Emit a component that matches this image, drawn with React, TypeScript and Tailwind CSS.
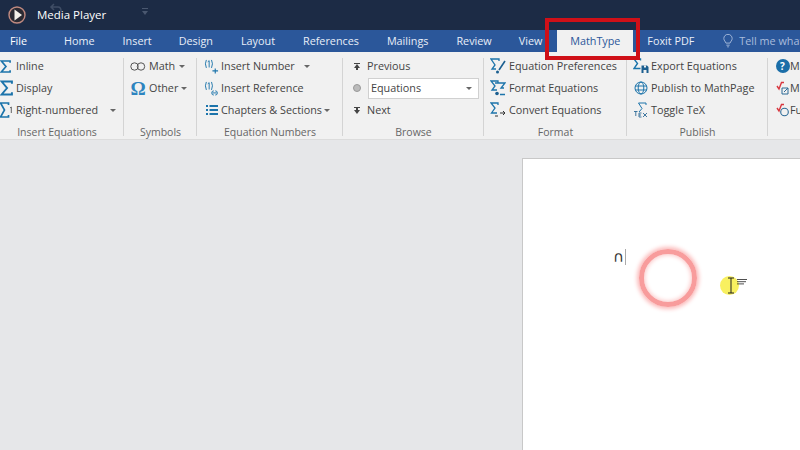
import type { ReactNode } from "react"

const font = { fontFamily: '"Open Sans", "Noto Sans", sans-serif' }
const teal = "#1c74ab"

const tabs = [
  ["Home", "ml-[37px]"],
  ["Insert", "ml-[28px]"],
  ["Design", "ml-[27px]"],
  ["Layout", "ml-[28px]"],
  ["References", "ml-[28px]"],
  ["Mailings", "ml-[28px]"],
  ["Review", "ml-[28px]"],
  ["View", "ml-[27px]"],
]

function Sigma({ className = "" }: { className?: string }) {
  return (
    <svg viewBox="0 0 12 14" className={className} fill="none" stroke={teal} strokeWidth="1.8">
      <path d="M11 3V1H1.500L6.500 7L1.500 13H11V11" />
    </svg>
  )
}

function Caret() {
  return <span className="inline-block w-0 h-0 border-x-[3px] border-x-transparent border-t-[3px] border-t-[#666]" />
}

function Row({ icon, label, caret, iconClass = "w-[16px]", className = "" }: { icon?: ReactNode; label: string; caret?: string; iconClass?: string; className?: string }) {
  return (
    <div className={`h-[22px] flex items-center whitespace-nowrap ${className}`}>
      <span className={`flex items-center justify-center flex-shrink-0 ${iconClass}`}>{icon}</span>
      <span>{label}</span>
      {caret && <span className={`flex ${caret}`}><Caret /></span>}
    </div>
  )
}

function Group({ title, width, children, last, titleClass = "" }: { title: string; width: string; children: ReactNode; last?: boolean; titleClass?: string }) {
  return (
    <div className={`relative h-full flex-shrink-0 flex flex-col ${width}`}>
      <div className="flex-1">{children}</div>
      <div className={`h-[16px] -mb-[1px] text-center text-[10.5px] leading-[16px] text-[#666] ${titleClass}`}>{title}</div>
      {!last && <div className="absolute right-0 top-[3px] bottom-[3px] w-px bg-[#d4d4d4]" />}
    </div>
  )
}

function Num({ children }: { children: ReactNode }) {
  return (
    <svg viewBox="0 0 16 16" className="w-[17px] h-[17px]" fill="none" stroke={teal}>
      <path d="M2.500 1Q0.500 5 2.500 9.500M8 1Q10 5 8 9.500M4 3L5.500 1.800V9" strokeWidth="1" />
      {children}
    </svg>
  )
}

export default function App() {
  return (
    <div className="w-[800px] h-[450px] relative overflow-hidden flex flex-col bg-[#e6e7e9] text-[10.8px] text-[#444]" style={font}>
      {/* title bar */}
      <div className="h-[30px] bg-[#1c2b45] flex items-center flex-shrink-0 text-white">
        <svg viewBox="0 0 18 18" className="w-[18px] h-[18px] ml-[8px] flex-shrink-0">
          <circle cx="9" cy="9" r="8" fill="#2a2a33" stroke="#c08a80" strokeWidth="1.4" />
          <path d="M6.500 3.500L14 9L6.500 14.500Z" fill="#f4f1ea" />
        </svg>
        <span className="ml-[11px] text-[11.5px] font-normal">Media Player</span>
        <svg viewBox="0 0 14 10" className="w-[14px] h-[10px] ml-[-57px] mb-[14px] opacity-30" fill="none" stroke="#8f9bb0" strokeWidth="1.5">
          <path d="M5 1L2 4L5 7M2 4H9Q12 4 12 8" />
        </svg>
        <svg viewBox="0 0 6 8" className="w-[6px] h-[8px] ml-[79px] mb-[6px] opacity-40" fill="#8f9bb0">
          <path d="M0 0H6V1H0ZM0 3H6L3 7Z" />
        </svg>
      </div>

      {/* tabs */}
      <div className="h-[22px] bg-[#2b579a] flex items-center flex-shrink-0 text-[#e8eef8] whitespace-nowrap">
        <span className="ml-[10px] text-white">File</span>
        {tabs.map(([name, margin]) => (
          <span key={name} className={margin}>{name}</span>
        ))}
        <div className="ml-[15px] w-[76px] h-full bg-[#f1f1f1] flex items-center justify-center text-[#2b579a] flex-shrink-0">MathType</div>
        <span className="ml-[14px]">Foxit PDF</span>
        <svg viewBox="0 0 12 16" className="w-[10px] h-[14px] ml-[29px] flex-shrink-0" fill="none" stroke="#a9bcdc" strokeWidth="1.1">
          <path d="M3.500 10.500C3 8.500 1 7.500 1 5A5 5 0 0 1 11 5C11 7.500 9 8.500 8.500 10.500ZM4 13H8M5 15H7" />
        </svg>
        <span className="ml-[6px] text-[#a9bcdc]">Tell me what</span>
      </div>

      {/* ribbon */}
      <div className="h-[88px] bg-[#f1f1f1] flex flex-shrink-0 pt-[3px] border-b border-[#dcdcdc]">
        <Group title="Insert Equations" width="w-[124px]" titleClass="pr-[10px]">
          <Row iconClass="w-[16px] !justify-start" icon={<Sigma className="w-[11px] h-[13px]" />} label="Inline" />
          <Row iconClass="w-[16px] !justify-start" icon={<Sigma className="w-[13px] h-[16px]" />} label="Display" />
          <Row
            iconClass="w-[16px] !justify-start"
            icon={
              <svg viewBox="0 0 13 16" className="w-[13px] h-[16px]" fill="none" stroke={teal} strokeWidth="1.7">
                <path d="M8.500 3V1H0.500L4.500 8L0.500 15H8.500V13" />
                <path d="M10 6L11.300 5V11" strokeWidth="0.9" stroke="#555" />
              </svg>
            }
            label="Right-numbered"
            caret="ml-[12px]"
          />
        </Group>

        <Group title="Symbols" width="w-[73px]">
          <div className="pl-[6px]">
            <Row
              iconClass="w-[16px] mr-[3px]"
              icon={
                <svg viewBox="0 0 16 9" className="w-[16px] h-[9px]" fill="none" stroke="#555" strokeWidth="1">
                  <circle cx="4.500" cy="4.500" r="3.700" />
                  <circle cx="11" cy="4.500" r="3.700" />
                </svg>
              }
              label="Math"
              caret="ml-[4px]"
            />
            <Row
              iconClass="w-[16px] mr-[3px]"
              icon={<span className="text-[19px] leading-none font-semibold text-[#2d84bf]" style={{ fontFamily: '"Liberation Serif", serif' }}>Ω</span>}
              label="Other"
              caret="ml-[3px]"
            />
          </div>
        </Group>

        <Group title="Equation Numbers" width="w-[146px]">
          <div className="pl-[7px]">
            <Row iconClass="w-[15px] mr-[2px]" icon={<Num><path d="M12 10V15.500M9 12.700H15" strokeWidth="1.200" /></Num>} label="Insert Number" caret="ml-[9px]" />
            <Row iconClass="w-[15px] mr-[2px]" icon={<Num><path d="M10.500 10.500A2.200 2.200 0 1 0 10.500 15M12 10.500A2.200 2.200 0 1 1 12 15M9 12.700H13.500" strokeWidth="1" /></Num>} label="Insert Reference" />
            <Row
              iconClass="w-[15px] mr-[2px]"
              icon={
                <svg viewBox="0 0 12 10" className="w-[12px] h-[10px]" fill={teal}>
                  <path d="M0 0H2V2H0ZM3.500 0H12V2H3.500ZM0 4H2V6H0ZM3.500 4H12V6H3.500ZM0 8H2V10H0ZM3.500 8H12V10H3.500Z" />
                </svg>
              }
              label="Chapters & Sections"
              caret="ml-[2px]"
            />
          </div>
        </Group>

        <Group title="Browse" width="w-[141px]">
          <div className="pl-[10px]">
            <Row
              iconClass="w-[8px] mr-[6px]"
              icon={<svg viewBox="0 0 6 7" className="w-[6px] h-[7px]" fill="#444"><path d="M0 1H6V0H0ZM3 1L6 5H4V7H2V5H0Z" /></svg>}
              label="Previous"
            />
            <div className="h-[22px] flex items-center">
              <span className="w-[8px] h-[8px] rounded-full bg-[#bbb] border border-[#999] mr-[7px] flex-shrink-0" />
              <div className="w-[111px] h-[21px] bg-white border border-[#d0d0d0] flex items-center justify-between pl-[2px] pr-[6px]">
                <span>Equations</span>
                <Caret />
              </div>
            </div>
            <Row
              iconClass="w-[8px] mr-[6px]"
              icon={<svg viewBox="0 0 6 7" className="w-[6px] h-[7px]" fill="#444"><path d="M0 0H6V1H0ZM2 1H4V3H6L3 7L0 3H2Z" /></svg>}
              label="Next"
            />
          </div>
        </Group>

        <Group title="Format" width="w-[143px]">
          <div className="pl-[6px]">
            <Row
              iconClass="w-[16px] mr-[3px]"
              icon={
                <svg viewBox="0 0 16 16" className="w-[16px] h-[16px]" fill="none" stroke={teal} strokeWidth="1.300">
                  <path d="M9 3V1H1L5 7L2 11H6" />
                  <path d="M15 3L9 12" strokeWidth="1.600" stroke="#1c5f90" />
                  <circle cx="7.500" cy="14" r="1.500" fill="#1c5f90" stroke="none" />
                </svg>
              }
              label="Equation Preferences"
            />
            <Row
              iconClass="w-[16px] mr-[3px]"
              icon={
                <svg viewBox="0 0 16 16" className="w-[16px] h-[16px]" fill="none" stroke={teal} strokeWidth="1.300">
                  <path d="M8 3V1H1L5 6L2 10H7" />
                  <path d="M5 3H15L11 8H14M10 14.500H15" />
                  <circle cx="7" cy="13.500" r="1.800" fill="#1c5f90" stroke="none" />
                </svg>
              }
              label="Format Equations"
            />
            <Row
              iconClass="w-[16px] mr-[3px]"
              icon={
                <svg viewBox="0 0 16 16" className="w-[16px] h-[16px]" fill="none" stroke={teal} strokeWidth="1.300">
                  <path d="M8 3V1H1L5 6L1.500 11H7" />
                  <path d="M10 11H15M13 9L15 11L13 13M5 14H8" strokeWidth="1" stroke="#333" />
                </svg>
              }
              label="Convert Equations"
            />
          </div>
        </Group>

        <Group title="Publish" width="w-[141px]">
          <div className="pl-[6px]">
            <Row
              iconClass="w-[16px] mr-[2px]"
              icon={
                <svg viewBox="0 0 16 16" className="w-[16px] h-[16px]" fill="none" stroke={teal} strokeWidth="1.400">
                  <path d="M7.500 2.500V1H1L4.500 5.500L1 10.500H7.500" />
                  <path d="M8.500 7.500H14L15.500 9V15H8.500Z" fill="#1c5f90" stroke="none" />
                  <path d="M11 7.500H13V9.500H11ZM10.500 12H13.500V15H10.500Z" fill="#f1f1f1" stroke="none" />
                </svg>
              }
              label="Export Equations"
            />
            <Row
              iconClass="w-[16px] mr-[2px]"
              icon={
                <svg viewBox="0 0 14 14" className="w-[14px] h-[14px]" fill="none" stroke={teal} strokeWidth="1">
                  <circle cx="7" cy="7" r="6" />
                  <ellipse cx="7" cy="7" rx="2.800" ry="6" />
                  <path d="M1 5H13M1 9H13" />
                </svg>
              }
              label="Publish to MathPage"
            />
            <Row
              iconClass="w-[16px] mr-[2px]"
              icon={
                <svg viewBox="0 0 16 16" className="w-[16px] h-[16px]" fill="none">
                  <path d="M13 3V1H5.500L9 6.500L6 10" stroke={teal} strokeWidth="1" />
                  <path d="M1 9.500H4.500M2.800 9.500V14M6 11H8.500M6 11V15H8.500M6 13H8M10 11L14 15M14 11L10 15" stroke="#2c6a96" strokeWidth="0.900" />
                </svg>
              }
              label="Toggle TeX"
            />
          </div>
        </Group>

        <Group title="" width="w-[33px]" last>
          <div className="pl-[7px]">
            <Row
              iconClass="w-[15px]"
              icon={<span className="w-[14px] h-[14px] rounded-full bg-[#1b6ea8] text-white text-[10px] font-bold leading-[14px] text-center">?</span>}
              label="MathType"
            />
            <Row
              iconClass="w-[15px]"
              icon={
                <svg viewBox="0 0 14 14" className="w-[14px] h-[14px]" fill="none">
                  <path d="M1 5L3 8L5.500 1.500H8" stroke="#d8373f" strokeWidth="1.400" />
                  <path d="M6 7H12V13H6ZM8 11L12 7" stroke="#2c6a96" strokeWidth="1" />
                </svg>
              }
              label="MathType"
            />
            <Row
              iconClass="w-[15px]"
              icon={
                <svg viewBox="0 0 14 14" className="w-[14px] h-[14px]" fill="none">
                  <path d="M1 5L3 8L5.500 1.500H8" stroke="#d8373f" strokeWidth="1.400" />
                  <circle cx="8.500" cy="9" r="3.800" stroke="#2c6a96" strokeWidth="1.100" />
                </svg>
              }
              label="Full"
            />
          </div>
        </Group>
      </div>

      {/* document area */}
      <div className="flex-1 pt-[18px] pl-[522px]">
        <div className="h-full bg-white border-l border-t border-[#c8c8c8] pl-[90px] pt-[89px]">
          <div className="flex items-center h-[18px]">
            <span className="text-[15px] leading-none text-[#333]" style={{ fontFamily: '"DejaVu Sans", sans-serif' }}>∩</span>
            <span className="w-px h-[16px] bg-[#aaa] ml-[1px]" />
          </div>
        </div>
      </div>

      {/* overlays: highlight box, click ring, cursor */}
      <div className="absolute left-[545px] top-[18px] w-[95px] h-[42px] border-[4px] border-[#cf1018]" />
      <div className="absolute left-[639px] top-[249px] w-[58px] h-[58px] rounded-full border-[5px] border-[#f89c9c] shadow-[0_0_4px_2px_#fbb8b8,inset_0_0_4px_1px_#fbc8c8]" />
      <div className="absolute left-[720px] top-[276px] w-[19px] h-[19px] rounded-full bg-[#f8f060]" />
      <svg viewBox="0 0 24 20" className="absolute left-[725px] top-[277px] w-[24px] h-[20px]" fill="none" stroke="#222" strokeWidth="1">
        <path d="M3 1H9M3 16H9M6 1V16" />
        <path d="M12 2.500H22M12 4.700H21M12 6.900H19" strokeWidth="0.800" />
      </svg>
    </div>
  )
}
